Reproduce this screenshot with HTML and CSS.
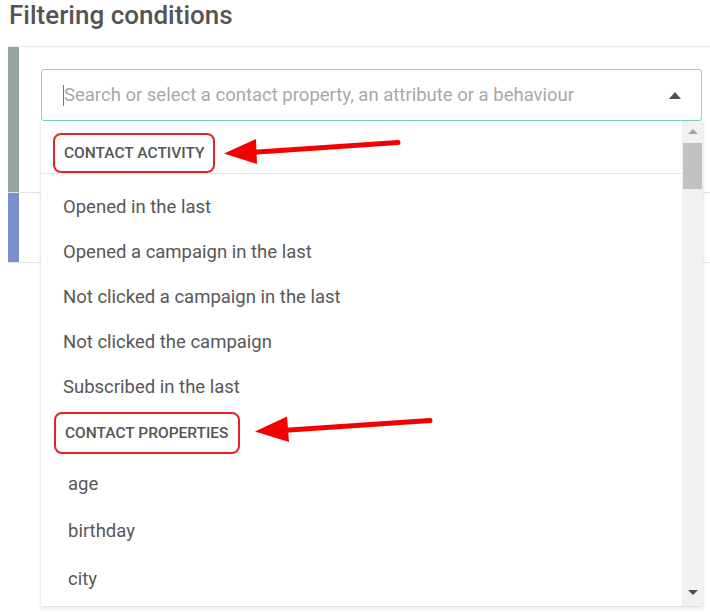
FILE: index.html
```html
<!DOCTYPE html>
<html>
<head>
<meta charset="utf-8">
<link rel="stylesheet" href="styles.css">
</head>
<body>
<div class="page">
  <h1 class="title">Filtering conditions</h1>
  <div class="card">
    <div class="row row-first">
      <div class="bar bar-gray"></div>
      <div class="row-body">
        <div class="select">
          <div class="input">
            <span class="caret"></span>
            <span class="placeholder">Search or select a contact property, an attribute or a behaviour</span>
            <span class="tri-up"></span>
          </div>
          <div class="menu">
            <div class="list">
              <div class="group-head first-head"><span class="mark">CONTACT ACTIVITY</span></div>
              <div class="items">
                <div class="item">Opened in the last</div>
                <div class="item">Opened a campaign in the last</div>
                <div class="item">Not clicked a campaign in the last</div>
                <div class="item">Not clicked the campaign</div>
                <div class="item">Subscribed in the last</div>
              </div>
              <div class="group-head second-head"><span class="mark mark-tall">CONTACT PROPERTIES</span></div>
              <div class="items props">
                <div class="item">age</div>
                <div class="item">birthday</div>
                <div class="item">city</div>
              </div>
            </div>
            <div class="scrollbar">
              <span class="sb-up"></span>
              <span class="sb-thumb"></span>
              <span class="sb-space"></span>
              <span class="sb-down"></span>
            </div>
          </div>
        </div>
      </div>
    </div>
    <div class="row row-second">
      <div class="bar bar-blue"></div>
      <div class="row-body"></div>
    </div>
  </div>
</div>
<svg class="arrows" width="710" height="615" viewBox="0 0 710 615">
  <line x1="250" y1="152.5" x2="398" y2="142.5" stroke="#f40000" stroke-width="5" stroke-linecap="round"/>
  <polygon points="224,153.5 256,139 257,164" fill="#f40000"/>
  <line x1="282" y1="430.5" x2="430" y2="420.5" stroke="#f40000" stroke-width="5" stroke-linecap="round"/>
  <polygon points="255,431.5 287,416.5 289,442" fill="#f40000"/>
</svg>
</body>
</html>
```
FILE: styles.css
```css
html, body {
  margin: 0;
  padding: 0;
  background: #fff;
  width: 710px;
  height: 615px;
  overflow: hidden;
  font-family: Roboto, "Liberation Sans", Arial, sans-serif;
}
.page {
  padding-left: 8px;
}
.title {
  margin: 0;
  padding: 0 0 0 1px;
  height: 46px;
  box-sizing: border-box;
  font-size: 26px;
  line-height: 31px;
  font-weight: 500;
  color: #545454;
}
.card {
  border-top: 1px solid #ececec;
}
.row {
  display: flex;
  border-bottom: 1px solid #e4e4e4;
}
.row-first {
  height: 145px;
}
.row-second {
  height: 69px;
}
.bar {
  width: 11px;
  flex: none;
}
.bar-gray {
  background: #94a5a2;
}
.bar-blue {
  background: #7a8fcd;
}
.row-body {
  flex: 1;
  padding: 22px 8px 0 22px;
}
.select {
  position: relative;
}
.input {
  height: 52px;
  box-sizing: border-box;
  border: 1px solid #7dd8c6;
  border-radius: 3px;
  display: flex;
  align-items: center;
  padding-left: 21px;
  background: #fff;
}
.caret {
  width: 1px;
  height: 21px;
  background: #777;
}
.placeholder {
  font-size: 18.5px;
  color: #a8a8a8;
  flex: 1;
  white-space: nowrap;
}
.tri-up {
  width: 0;
  height: 0;
  border-left: 6px solid transparent;
  border-right: 6px solid transparent;
  border-bottom: 7px solid #4f4f4f;
  margin-right: 20px;
}
.menu {
  position: absolute;
  top: 52px;
  left: 0;
  right: -1px;
  height: 485px;
  background: #fff;
  display: flex;
  box-shadow: 0 2px 4px rgba(0,0,0,0.12), 0 0 1px rgba(0,0,0,0.14);
  overflow: hidden;
}
.list {
  flex: 1;
  min-width: 0;
}
.group-head {
  display: flex;
}
.first-head {
  height: 53px;
  box-sizing: border-box;
  padding: 12px 0 0 12px;
  border-bottom: 1px solid #e8e8e8;
}
.second-head {
  padding: 3px 0 6px 13px;
}
.mark {
  display: inline-block;
  border: 2px solid #e8202a;
  border-radius: 8px;
  padding: 9px 9px;
  line-height: 18px;
  font-size: 15.5px;
  font-weight: 500;
  color: #555;
}
.mark-tall {
  padding: 10px 9px;
}
.items {
  padding-top: 10px;
}
.item {
  height: 45px;
  display: flex;
  align-items: center;
  padding-left: 22px;
  font-size: 18.5px;
  color: #575757;
}
.props {
  padding-top: 0;
}
.props .item {
  height: 47.5px;
  padding-left: 27px;
}
.scrollbar {
  width: 21px;
  flex: none;
  background: #f1f1f1;
  display: flex;
  flex-direction: column;
  align-items: center;
}
.sb-up {
  width: 0;
  height: 0;
  margin-top: 8px;
  border-left: 5px solid transparent;
  border-right: 5px solid transparent;
  border-bottom: 5px solid #a3a3a3;
}
.sb-thumb {
  margin-top: 9px;
  width: 19px;
  height: 46px;
  background: #c1c1c1;
}
.sb-space {
  flex: 1;
}
.sb-down {
  width: 0;
  height: 0;
  margin-bottom: 11px;
  border-left: 5px solid transparent;
  border-right: 5px solid transparent;
  border-top: 5px solid #505050;
}
.arrows {
  position: absolute;
  left: 0;
  top: 0;
  pointer-events: none;
}
```
